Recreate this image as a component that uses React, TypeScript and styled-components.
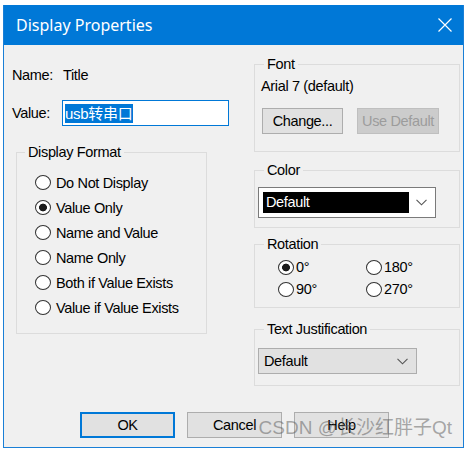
import styled, { createGlobalStyle } from "styled-components";

const GlobalStyle = createGlobalStyle`
  html, body {
    margin: 0;
    padding: 0;
    background: #ffffff;
  }
  body {
    font-family: "Liberation Sans", Arial, sans-serif;
  }
`;

const Window = styled.div`
  position: relative;
  margin: 5px 0 0 3px;
  width: 461px;
  height: 443px;
  box-sizing: border-box;
  border: 1px solid #1a7fd6;
  border-top: none;
  background: #f0f0f0;
  display: flex;
  flex-direction: column;
  overflow: hidden;
`;

const TitleBar = styled.div`
  height: 40px;
  flex: none;
  background: #0078d7;
  color: #ffffff;
  display: flex;
  align-items: center;
  justify-content: space-between;
  padding: 0 11px 0 12px;
  font-family: "Noto Sans", "Open Sans", sans-serif;
  font-size: 16px;
`;

const CloseIcon = () => (
  <svg width="14" height="14" viewBox="0 0 14 14">
    <path d="M0.5 0.5 L13.5 13.5 M13.5 0.5 L0.5 13.5" stroke="#ffffff" strokeWidth="1.2" />
  </svg>
);

const Body = styled.div`
  flex: 1;
  display: flex;
  flex-direction: column;
  font-size: 14.5px;
  letter-spacing: -0.35px;
  color: #000000;
`;

const Columns = styled.div`
  display: flex;
`;

const LeftCol = styled.div`
  width: 238px;
  padding: 20px 0 0 8px;
  display: flex;
  flex-direction: column;
`;

const RightCol = styled.div`
  width: 206px;
  margin-left: 4px;
  padding-top: 11px;
  display: flex;
  flex-direction: column;
`;

const FieldRow = styled.div<{ $h: number; $mt?: number }>`
  display: flex;
  align-items: center;
  height: ${(p) => p.$h}px;
  margin-top: ${(p) => p.$mt ?? 0}px;
`;

const FieldLabel = styled.span<{ $w: number }>`
  width: ${(p) => p.$w}px;
  flex: none;
`;

const TextBox = styled.div`
  width: 167px;
  height: 26px;
  box-sizing: border-box;
  border: 1px solid #0078d7;
  background: #ffffff;
  display: flex;
  align-items: center;
  padding-left: 2px;
`;

const Selected = styled.span`
  background: #0078d7;
  color: #ffffff;
  font-family: "Liberation Sans", "Noto Sans CJK SC", sans-serif;
  font-size: 15px;
  line-height: 19px;
  letter-spacing: -0.3px;
  padding-right: 1px;
`;

const GroupBox = styled.fieldset<{
  $w: number;
  $mt: number;
  $ml?: number;
  $pad: [number, number, number];
  $lx?: number;
}>`
  margin: ${(p) => p.$mt}px 0 0 ${(p) => p.$ml ?? 0}px;
  width: ${(p) => p.$w}px;
  min-width: 0;
  box-sizing: border-box;
  border: 1px solid #dcdcdc;
  padding: ${(p) => p.$pad[0]}px 0 ${(p) => p.$pad[1]}px ${(p) => p.$pad[2]}px;

  & > legend {
    padding: 0 3px;
    line-height: 16px;
    margin-left: ${(p) => (p.$lx ?? 9) - p.$pad[2]}px;
  }
`;

const RadioList = styled.div<{ $ml: number }>`
  display: flex;
  flex-direction: column;
  margin-left: ${(p) => p.$ml}px;
`;

const RadioGrid = styled.div`
  display: grid;
  grid-template-columns: 88px 88px;
  grid-auto-rows: 22px;
`;

const RadioItem = styled.label<{ $h?: number; $gap: number }>`
  display: flex;
  align-items: center;
  height: ${(p) => (p.$h ? `${p.$h}px` : "auto")};
  gap: ${(p) => p.$gap}px;
`;

const RadioDot = styled.input.attrs({ type: "radio" })`
  appearance: none;
  margin: 0;
  width: 16px;
  height: 15px;
  flex: none;
  box-sizing: border-box;
  border: 1px solid #333333;
  border-radius: 50%;
  background: #ffffff;

  &:checked {
    background: radial-gradient(circle, #1a1a1a 0 3.6px, #ffffff 4.2px);
  }
`;

const FontName = styled.div`
  line-height: 16px;
`;

const ButtonRow = styled.div<{ $mt: number; $ml: number; $gap: number }>`
  display: flex;
  margin: ${(p) => p.$mt}px 0 0 ${(p) => p.$ml}px;
  gap: ${(p) => p.$gap}px;
`;

const PushButton = styled.button<{ $w: number; $primary?: boolean }>`
  width: ${(p) => p.$w}px;
  height: 26px;
  box-sizing: border-box;
  padding: 0;
  font-family: inherit;
  font-size: 14.5px;
  letter-spacing: -0.35px;
  color: #000000;
  background: #e1e1e1;
  border: ${(p) => (p.$primary ? "2px solid #0078d7" : "1px solid #adadad")};

  &:disabled {
    background: #cccccc;
    border-color: #bfbfbf;
    color: #9c9c9c;
  }
`;

const ColorCombo = styled.div`
  width: 178px;
  height: 31px;
  margin-left: 1px;
  box-sizing: border-box;
  border: 1px solid #7a7a7a;
  background: #ffffff;
  padding: 0 8px 0 4px;
  display: flex;
  align-items: center;
  justify-content: space-between;
`;

const ColorSwatch = styled.div`
  width: 146px;
  height: 21px;
  background: #000000;
  color: #ffffff;
  line-height: 21px;
  padding-left: 3px;
  box-sizing: border-box;
`;

const PlainCombo = styled.div`
  width: 159px;
  height: 26px;
  margin-left: 1px;
  box-sizing: border-box;
  border: 1px solid #adadad;
  background: #e1e1e1;
  padding: 0 8px 0 5px;
  display: flex;
  align-items: center;
  justify-content: space-between;
`;

const Chevron = () => (
  <svg width="11" height="7" viewBox="0 0 11 7">
    <polyline points="0.5,0.8 5.5,5.8 10.5,0.8" fill="none" stroke="#555555" strokeWidth="1.1" />
  </svg>
);

const Watermark = styled.div`
  position: absolute;
  right: 11px;
  bottom: 8px;
  font-family: "Liberation Sans", "Noto Sans CJK SC", sans-serif;
  font-size: 19px;
  line-height: 22px;
  color: rgba(90, 90, 90, 0.5);
  white-space: nowrap;
  pointer-events: none;
`;

const formats = [
  "Do Not Display",
  "Value Only",
  "Name and Value",
  "Name Only",
  "Both if Value Exists",
  "Value if Value Exists",
];

const rotations = ["0°", "180°", "90°", "270°"];

export default function App() {
  return (
    <>
      <GlobalStyle />
      <Window>
        <TitleBar>
          <span>Display Properties</span>
          <CloseIcon />
        </TitleBar>
        <Body>
          <Columns>
            <LeftCol>
              <FieldRow $h={20}>
                <FieldLabel $w={51}>Name:</FieldLabel>
                <span>Title</span>
              </FieldRow>
              <FieldRow $h={26} $mt={15}>
                <FieldLabel $w={50}>Value:</FieldLabel>
                <TextBox>
                  <Selected>usb转串口</Selected>
                </TextBox>
              </FieldRow>
              <GroupBox $w={191} $mt={18} $ml={4} $pad={[10, 13, 8]} $lx={8}>
                <legend>Display Format</legend>
                <RadioList $ml={10}>
                  {formats.map((f) => (
                    <RadioItem key={f} $h={25} $gap={5}>
                      <RadioDot name="fmt" defaultChecked={f === "Value Only"} />
                      {f}
                    </RadioItem>
                  ))}
                </RadioList>
              </GroupBox>
            </LeftCol>
            <RightCol>
              <GroupBox $w={206} $mt={0} $pad={[6, 17, 6]}>
                <legend>Font</legend>
                <FontName>Arial 7 (default)</FontName>
                <ButtonRow $mt={14} $ml={1} $gap={14}>
                  <PushButton $w={81}>Change...</PushButton>
                  <PushButton $w={82} disabled>
                    Use Default
                  </PushButton>
                </ButtonRow>
              </GroupBox>
              <GroupBox $w={206} $mt={10} $pad={[9, 9, 2]}>
                <legend>Color</legend>
                <ColorCombo>
                  <ColorSwatch>Default</ColorSwatch>
                  <Chevron />
                </ColorCombo>
              </GroupBox>
              <GroupBox $w={206} $mt={8} $pad={[4, 7, 23]}>
                <legend>Rotation</legend>
                <RadioGrid>
                  {rotations.map((r) => (
                    <RadioItem key={r} $gap={2}>
                      <RadioDot name="rot" defaultChecked={r === "0°"} />
                      {r}
                    </RadioItem>
                  ))}
                </RadioGrid>
              </GroupBox>
              <GroupBox $w={206} $mt={13} $pad={[11, 11, 2]}>
                <legend>Text Justification</legend>
                <PlainCombo>
                  <span>Default</span>
                  <Chevron />
                </PlainCombo>
              </GroupBox>
            </RightCol>
          </Columns>
          <ButtonRow $mt={26} $ml={76} $gap={12}>
            <PushButton $w={95} $primary>
              OK
            </PushButton>
            <PushButton $w={95}>Cancel</PushButton>
            <PushButton $w={95}>Help</PushButton>
          </ButtonRow>
        </Body>
        <Watermark>CSDN @长沙红胖子Qt</Watermark>
      </Window>
    </>
  );
}
